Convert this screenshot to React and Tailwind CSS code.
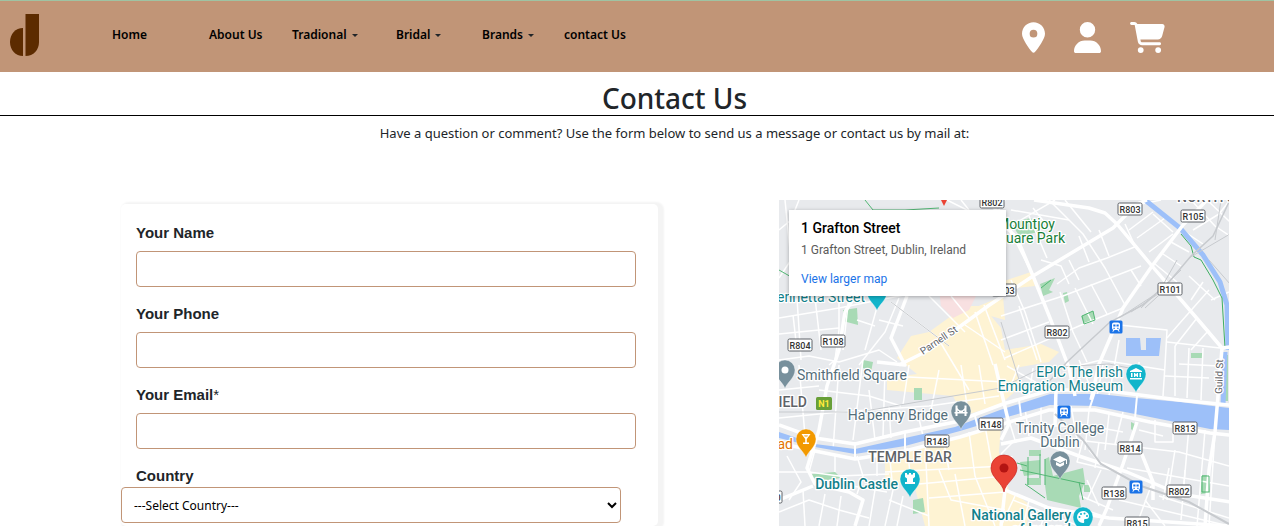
import React from "react";
import { FaLocationDot, FaUser, FaCartShopping } from "react-icons/fa6";

const navItems = [
  { label: "Home" },
  { label: "About Us" },
  { label: "Tradional", menu: true },
  { label: "Bridal", menu: true },
  { label: "Brands", menu: true },
  { label: "contact Us" },
];

function Logo() {
  return (
    <svg viewBox="0 0 29 42" className="h-[42px] w-[29px]" fill="#5c2b00" aria-label="Logo">
      <path d="M13 14v28C5.500 42 0 36 0 28S5.500 14 13 14z" />
      <path d="M15.500 0H29v28c0 8-5.500 14-13.500 14z" />
    </svg>
  );
}

function Header() {
  return (
    <header className="flex h-[72px] shrink-0 items-center border-t border-[#9fc3a3] bg-[#c19577] pb-[3px] pl-[10px] pr-[109px]">
      <a href="#home" aria-label="Home page">
        <Logo />
      </a>
      <nav className="ml-[73px] grid grid-cols-[97px_83px_104px_86px_82px_auto] items-center text-[12px] font-semibold text-black">
        {navItems.map((item) =>
          item.menu ? (
            <button key={item.label} type="button" className="flex items-center gap-[5px] whitespace-nowrap text-left">
              {item.label}
              <span className="border-x-[3px] border-t-[3px] border-x-transparent border-t-[#212529]" />
            </button>
          ) : (
            <a key={item.label} href={"#" + item.label} className="whitespace-nowrap">
              {item.label}
            </a>
          )
        )}
      </nav>
      <div className="ml-auto flex items-center gap-[29px] pt-1 text-white">
        <a href="#stores" aria-label="Stores"><FaLocationDot className="h-[31px] w-[23px]" /></a>
        <a href="#account" aria-label="Account"><FaUser className="h-[31px] w-[27px]" /></a>
        <a href="#cart" aria-label="Cart"><FaCartShopping className="h-[31px] w-[35px]" /></a>
      </div>
    </header>
  );
}

function Field({ id, label, mark, type }) {
  return (
    <div className="flex flex-col gap-[7px] pl-[15px] pr-[22px]">
      <label htmlFor={id} className="text-[15px] leading-[22px] font-bold">
        {label}
        {mark && <span className="font-normal">{mark}</span>}
      </label>
      <input id={id} type={type} className="h-9 w-full rounded border border-[#c19577] px-3 text-sm outline-none" />
    </div>
  );
}

const minorRoads = [
  "M0 30L12 20 20 0", "M6 0L12 60 0 78", "M0 118L60 108 140 92", "M0 160L30 156 60 162 100 150 118 162",
  "M60 96L60 130 56 160 50 165", "M70 96L64 150", "M100 100L86 150", "M120 98L106 132 80 165", "M112 102L170 146",
  "M150 96L186 132", "M172 96L190 118", "M205 105L226 160", "M196 112L214 165", "M160 140L190 190",
  "M186 125L226 152", "M130 165L124 205", "M160 170L150 220", "M182 165L188 205", "M200 165L206 204", "M110 176L226 182",
  "M60 165L54 250", "M84 160L74 240", "M20 165L26 236", "M40 190L90 196 122 206", "M0 190L40 186", "M0 218L60 212 150 206 220 196",
  "M90 190L96 240", "M106 170L104 236", "M110 206L112 238", "M138 210L144 236",
  "M18 98L22 160", "M36 98L42 150", "M0 134L60 128", "M100 120L124 126", "M14 115L18 150", "M78 120L96 126",
  "M168 0L236 34", "M182 0L190 10", "M226 0L216 16", "M228 28L276 0", "M250 68L228 24", "M268 58L250 16",
  "M232 10L290 20", "M270 0L304 34 326 68 346 105", "M286 0L312 32", "M254 8L270 28",
  "M222 116L284 96 362 66", "M226 158L300 126 344 108", "M222 140L270 122", "M232 80L246 112 262 162",
  "M240 106L258 160", "M281 92L294 132 308 162", "M296 88L314 124", "M312 84L328 114", "M278 84L300 68 328 58 358 46",
  "M300 36L310 62", "M320 30L330 56", "M290 60L300 80", "M262 60L282 66 290 84", "M352 70L362 86",
  "M340 16L362 4 382 0", "M350 30L374 12", "M358 38L386 18 398 28", "M370 52L394 34", "M346 24L356 46", "M374 14L394 32",
  "M376 64L398 82", "M384 54L402 66", "M392 42L410 52", "M412 0L436 26 451 36", "M428 0L451 22", "M414 30L440 14 451 0",
  "M400 28L424 44", "M430 90L400 124 388 138", "M410 76L436 100", "M424 82L412 100", "M418 118L396 146", "M430 130L412 150", "M432 100L450 92",
  "M331 124L388 130 386 165 384 196", "M388 142L441 148 450 147", "M396 146L396 196", "M410 148L408 198", "M424 148L422 200",
  "M302 165L322 160 386 170", "M360 190L360 162", "M228 166L274 192", "M240 165L230 190", "M254 168L250 196", "M300 160L316 198",
  "M386 176L430 178", "M400 164L440 166", "M324 165L318 196", "M340 140L330 196",
  "M228 214L236 240 222 254", "M246 208L250 236", "M262 206L262 226 300 226", "M292 206L298 240", "M310 210L306 250", "M330 214L326 250",
  "M300 224L344 232", "M298 240L400 252 450 266", "M344 212L336 244", "M376 220L376 242 394 242 394 224", "M410 226L402 320",
  "M426 230L418 326", "M436 232L430 326", "M396 250L388 300", "M360 230L384 236", "M348 268L450 286", "M310 250L322 264",
  "M304 240L298 262 340 272", "M320 242L316 268", "M366 300L386 326", "M380 296L450 318", "M372 286L358 324", "M340 300L450 326",
  "M302 296L334 310", "M306 310L330 318", "M308 280L320 306", "M322 270L308 300", "M390 268L384 300", "M406 270L404 296",
  "M0 272L30 272 60 276 110 274", "M36 250L30 272", "M56 254L56 272", "M78 256L84 276 78 294", "M98 252L98 276",
  "M110 250L114 290 106 326", "M128 248L132 280", "M146 240L150 326", "M164 238L170 270", "M190 232L196 276 216 326",
  "M206 226L214 270", "M106 272L226 266", "M140 284L226 276", "M160 270L172 300 226 310", "M176 274L186 326", "M150 298L226 292",
  "M0 312L30 300 60 310 90 318", "M8 256L22 282 10 300", "M24 290L26 326", "M46 294L40 326", "M62 296L58 326", "M96 290L90 326",
  "M62 284L108 292", "M110 300L150 316", "M124 296L118 326", "M222 326L236 296", "M234 300L300 326", "M250 300L244 326", "M268 306L262 326",
];

const mainRoads = [
  "M255 0L310 8 326 13 338 24 373 66 421 122 443 148 451 147",
  "M120 165L146 152 209 106 254 76 334 28 358 4 368 0",
  "M428 0L404 25 373 66 344 108 320 164 312 200",
  "M210 0L241 45 254 76 271 118 290 168 296 196",
  "M76 96L66 112 60 150 48 186 40 230 28 268 36 284 70 292 84 300 76 326",
  "M0 225L36 238 76 244 126 232 176 222 224 204 272 190 322 190 400 200 451 205",
  "M0 243L36 251 76 259 126 251 181 237 224 224 270 210 316 210 371 222 431 233 451 235",
  "M98 162L126 165 112 138 128 96",
  "M216 164L222 190 230 224 222 240",
  "M222 244L252 238 300 256 348 272 400 294 451 302",
  "M358 222L344 264 328 308 320 326",
  "M362 252L374 282 374 300",
  "M443 148L436 232 430 270 426 326",
  "M226 290L270 308 330 318 450 326",
  "M277 190L276 226",
  "M0 300L34 286",
  "M232 256L226 290 222 326",
];

const shields = [
  ["R802", 213, 2], ["R803", 351, 9], ["R105", 414, 16], ["R803", 225, 90], ["R101", 391, 89],
  ["R802", 278, 132], ["R804", 21, 145], ["R108", 54, 141], ["R148", 158, 241], ["R148", 212, 224],
  ["R813", 406, 228], ["R814", 351, 248], ["R138", 335, 293], ["R802", 400, 291], ["R815", 358, 323], ["R110", -9, 297],
];

function Shield({ text, x, y }) {
  return (
    <g>
      <rect x={x - 12} y={y - 6} width="24" height="12" rx="1.500" fill="#fff" stroke="#5f6368" />
      <text x={x} y={y + 4} textAnchor="middle" fontSize="9" fontWeight="500" fill="#333">{text}</text>
    </g>
  );
}

function Pin({ x, y, color, children }) {
  return (
    <g transform={`translate(${x} ${y})`}>
      <path d="M0 18.500C-1.500 13-10 8-10 0a10 10 0 0 1 20 0c0 8-8.500 13-10 18.500z" fill={color} stroke="#fff" strokeOpacity=".5" strokeWidth=".7" />
      {children}
    </g>
  );
}

function Station({ x, y }) {
  return (
    <g transform={`translate(${x} ${y})`}>
      <rect x="-6.500" y="-6.500" width="13" height="13" rx="1.500" fill="#1a73e8" />
      <path fillRule="evenodd" fill="#fff" d="M-2-4.500h4a2 2 0 0 1 2 2V1a2 2 0 0 1-1.500 2L4 4.500H2.500L1.500 3h-3l-1 1.500H-4L-2.500 3A2 2 0 0 1-4 1v-3.500a2 2 0 0 1 2-2zM-2.700-2.500v2h2.200v-2zM.500-2.500v2h2.200v-2zM-2.500.800v1.200h1.200V.800zM1.300.800v1.200h1.200V.800z" />
    </g>
  );
}

function StreetMap() {
  return (
    <svg viewBox="0 0 450 450" className="block w-full" fontFamily="Roboto, sans-serif" role="img" aria-label="Map of Dublin city centre">
      <rect width="450" height="450" fill="#e8eaed" />
      <g fill="#fef3d3">
        <path d="M150 132L186 106 204 106 222 128 226 150 262 144 280 152 270 162 236 168 242 186 222 204 184 216 174 196 108 190 108 178 138 174 118 158 132 136z" />
        <path d="M222 82L252 72 256 86 236 88 224 98z" />
        <path d="M106 252L136 250 186 236 222 226 220 252 230 290 250 304 248 326 146 326 136 288 106 280z" />
        <path d="M190 110L224 96 226 120z" />
      </g>
      <path d="M160 90L200 90 190 110 174 118 162 106z" fill="#f8e0e1" />
      <g fill="#a8dab5">
        <path d="M64 110L78 108 79 125 64 121z" />
        <path d="M232 22L252 18 260 32 240 36z" />
        <path d="M261 84L276 78 270 90 274 92 264 96z" />
        <path d="M302 116L314 111 316 120 305 124z" />
        <path d="M284 93L288 92 290 101 286 103z" />
        <path d="M84 160L94 162 92 172 84 168z" />
        <path d="M135 188h8v12h-8z" />
        <path d="M32 274L56 272 62 278 48 280 34 278z" />
        <path d="M134 300L144 298 146 312 134 314z" />
        <path d="M250 250h12v6h-12zM241 262l20-2v14l-16 2zM248 278h14v7h-14z" />
        <path d="M266 259L270 257 274 276 304 268 306 282 300 296 302 308 268 300 266 285z" />
        <path d="M305 285h6v7h-6zM352 222l4 2-1 8-3-3z" />
        <path d="M422 275h9v18l-9 1z" />
        <path d="M412 153h12v5h-12zM442 155h7v46h-7z" />
      </g>
      <g fill="none" stroke="#fff" strokeWidth="1.500" strokeLinejoin="round">
        {minorRoads.map((d) => <path key={d} d={d} />)}
      </g>
      <path fill="#9dc0f9" d="M0 232L36 244 76 249 126 238 176 227 221 210 271 194 320 194 357 198 401 202 451 208V230L431 229 371 217 316 206 271 205 221 219 181 231 126 246 76 254 36 247 0 238z" />
      <path fill="#9dc0f9" d="M347 138h14l1 12h5v-12h15l-2 18h-33z" />
      <path d="M366 0L401 28 424 55 441 82 448 105 449 150" fill="none" stroke="#9dc0f9" strokeWidth="5" />
      <path d="M446 152L444 205" fill="none" stroke="#9dc0f9" strokeWidth="5" />
      <path d="M402 34L412 46 415 57 422 60 434 80 443 98 446 148" fill="none" stroke="#3eae62" />
      <g fill="none" stroke="#fff" strokeWidth="3.500" strokeLinejoin="round">
        {mainRoads.map((d) => <path key={d} d={d} />)}
      </g>
      <g fill="none" stroke="#fff" strokeWidth="2">
        <path d="M76 242V260M126 232V252M196 216L200 232M240 200L242 216M316 192L310 210M358 196L356 218" />
      </g>
      <g fill="none" stroke="#c7cace">
        <path d="M262 190L288 162 331 122 364 105 390 82 412 56 434 36 451 0" strokeWidth="1.500" />
        <path d="M340 118L380 92 398 60M352 112L388 88M362 108L402 70M366 108L390 86M410 58L451 34M430 60L451 84M436 40L442 0" />
        <path d="M0 212L80 212 150 200 222 188 262 168 330 164 350 168" />
        <path d="M276 214L304 240 322 264 362 286 410 302 450 324" strokeWidth="2" />
        <path d="M112 102L170 146M222 122L242 186" />
      </g>
      <g fill="none" stroke="#52b774">
        <path d="M86 0L94 10H126L160 8M0 70L14 78M238 263L248 266M241 270L306 284M246 284L266 298M266 259V285M300 282L304 300" />
        <path d="M262 88L272 80M303 116L314 111 316 120 305 124zM423 276h7v16h-7zM249 257v28M261 254v24" />
      </g>
      <path d="M162 0l3 6 3-6z" fill="#ea4335" />

      {shields.map(([text, x, y]) => <Shield key={text + x} text={text} x={x} y={y} />)}
      <rect x="37" y="197" width="16" height="13" rx="1.500" fill="#689f38" />
      <text x="45" y="207" textAnchor="middle" fontSize="9" fontWeight="700" fill="#ffeb3b">N1</text>
      <Station x={337} y={127} />
      <Station x={285} y={212} />
      <Station x={357} y={287} />

      <g stroke="#fff" strokeWidth="2.500" strokeLinejoin="round" paintOrder="stroke" fontSize="14">
        <g fill="#188038">
          <text x="276" y="29" textAnchor="end">Mountjoy</text>
          <text x="286" y="43" textAnchor="end">Square Park</text>
        </g>
        <g fill="#12808a" fontWeight="500">
          <text x="86" y="102" textAnchor="end" fontWeight="400">Henrietta Street</text>
          <text x="344" y="177" textAnchor="end" fontWeight="400">EPIC The Irish</text>
          <text x="344" y="191" textAnchor="end" fontWeight="400">Emigration Museum</text>
          <text x="119" y="289" textAnchor="end">Dublin Castle</text>
          <text x="292" y="320" textAnchor="end">National Gallery</text>
          <text x="292" y="334" textAnchor="end">of Ireland</text>
        </g>
        <g fill="#546e7a">
          <text x="18" y="180">Smithfield Square</text>
          <text x="169" y="220" textAnchor="end">Ha'penny Bridge</text>
          <text x="281" y="233" textAnchor="middle">Trinity College</text>
          <text x="281" y="247" textAnchor="middle">Dublin</text>
        </g>
        <text x="14" y="249" textAnchor="end" fill="#e37400">Brazen Head</text>
        <g fill="#5f6368" fontWeight="500">
          <text x="28" y="207" textAnchor="end">SMITHFIELD</text>
          <text x="131" y="262" textAnchor="middle">TEMPLE BAR</text>
          <text x="398" y="2">NORTH STRAND</text>
        </g>
        <g fill="#5f6368" fontSize="10">
          <text transform="translate(144 155) rotate(-34)">Parnell St</text>
          <text transform="translate(443 194) rotate(-88)">Guild St</text>
        </g>
      </g>

      <Pin x={6} y={170} color="#78909c"><circle r="3.500" fill="#fff" /></Pin>
      <Pin x={182} y={211} color="#78909c">
        <path d="M-5.500-5.500h2v2.500C-2.500-1-1-.500 0-.500S2.500-1 3.500-3v-2.500h2V1h1v1.500h-1V5h-2V2.500h-7V5h-2V2.500h-1V1h1zM-3.500-.500V1h1.500v-.700zM3.500-.500V1H2v-.700z" fillRule="evenodd" fill="#fff" />
      </Pin>
      <Pin x={27} y={239} color="#f29900"><path d="M-4.500-5h9L.800 0v3.500H3V5h-6V3.500h2.200V0zM-2-3.500l.700 1h2.600l.700-1z" fillRule="evenodd" fill="#fff" /></Pin>
      <Pin x={131} y={279} color="#12b5cb">
        <path d="M-5-6h2v1.500h2V-6h2v1.500h2V-6h2v4L3-.500V3h2v2H-5V3h2V-.500L-5-2z" fill="#fff" />
      </Pin>
      <Pin x={281} y={261} color="#78909c">
        <path d="M0-5l7 3.500V3H6V-1L0 2-7-1.500zM-4 1l4 2 4-2v3L0 6l-4-2z" fill="#fff" />
      </Pin>
      <Pin x={357} y={174} color="#12b5cb">
        <path d="M0-6l6 3v1H-6v-1zM-5-1h1.500v4H-5zM3.500-1H5v4H3.500zM-2 3v-4h1L0 .500 1-1h1v4H1V1.500L0 3l-1-1.500V3zM-6 4H6v1.500H-6z" fill="#fff" />
      </Pin>
      <Pin x={98} y={92} color="#12b5cb"><path d="M-4 4h8v-3h-8z" fill="#fff" /></Pin>
      <Pin x={304} y={317} color="#12b5cb">
        <path d="M0-6a6 6 0 1 0 0 12c2 0 1-2 1-3s1-1 2-1c2 0 3-1 3-3 0-3-3-5-6-5z" fill="#fff" />
        <g fill="#12b5cb"><circle cx="-3.500" cy="0" r="1" /><circle cx="-2" cy="-3" r="1" /><circle cx="1.500" cy="-3.500" r="1" /><circle cx="4" cy="-1" r="1" /></g>
      </Pin>
      <path d="M225 292c-1-9-13-14-13-24a13 13 0 0 1 26 0c0 10-12 15-13 24z" fill="#ea4335" stroke="#c5221f" strokeWidth=".7" />
      <circle cx="225" cy="268" r="4.500" fill="#b31412" />
    </svg>
  );
}

function MapPanel() {
  return (
    <section className="relative w-[450px] shrink-0 self-start overflow-hidden font-[Roboto,sans-serif]">
      <StreetMap />
      <div className="absolute left-[10px] top-[10px] w-[217px] bg-white px-3 pt-[9px] pb-[9px] shadow-[0_1px_4px_rgba(0,0,0,0.3)]">
        <h2 className="text-sm leading-[19px] font-medium text-black">1 Grafton Street</h2>
        <p className="mt-[4px] text-[12px] leading-4 text-[#5b5b5b]">1 Grafton Street, Dublin, Ireland</p>
        <a href="#map" className="mt-[13px] block text-[12px] leading-4 text-[#1a73e8]">View larger map</a>
      </div>
    </section>
  );
}

export default function App() {
  return (
    <div className="flex h-screen flex-col overflow-hidden bg-white font-['Noto_Sans','Open_Sans',sans-serif] text-[#212529]">
      <Header />
      <div className="shrink-0 border-b border-black pl-[75px] text-center">
        <h1 className="pt-[9px] text-[28px] leading-[34px] font-medium">Contact Us</h1>
      </div>
      <p className="mt-[7px] shrink-0 pl-[75px] text-center text-[13px] leading-[21px]">
        Have a question or comment? Use the form below to send us a message or contact us by mail at:
      </p>
      <main className="flex min-h-0 flex-1 gap-[121px] pt-[56px] pr-[45px] pl-[121px]">
        <form className="mt-1 flex min-w-0 flex-1 flex-col gap-[16px] rounded-[5px] pt-[18px] shadow-[3px_1px_2px_3px_#f4f4f4] font-['Liberation_Sans',Arial,sans-serif]">
          <Field id="name" label="Your Name" type="text" />
          <Field id="phone" label="Your Phone" type="tel" />
          <Field id="email" label="Your Email" mark="*" type="email" />
          <div className="flex flex-col pr-[37px]">
            <label htmlFor="country" className="pl-[15px] text-[15px] leading-[22px] font-bold">Country</label>
            <select id="country" className="h-9 w-full rounded border border-[#c19577] bg-white px-2 font-['Noto_Sans','Open_Sans',sans-serif] text-[12px] text-black">
              <option>---Select Country---</option>
            </select>
          </div>
        </form>
        <MapPanel />
      </main>
    </div>
  );
}
